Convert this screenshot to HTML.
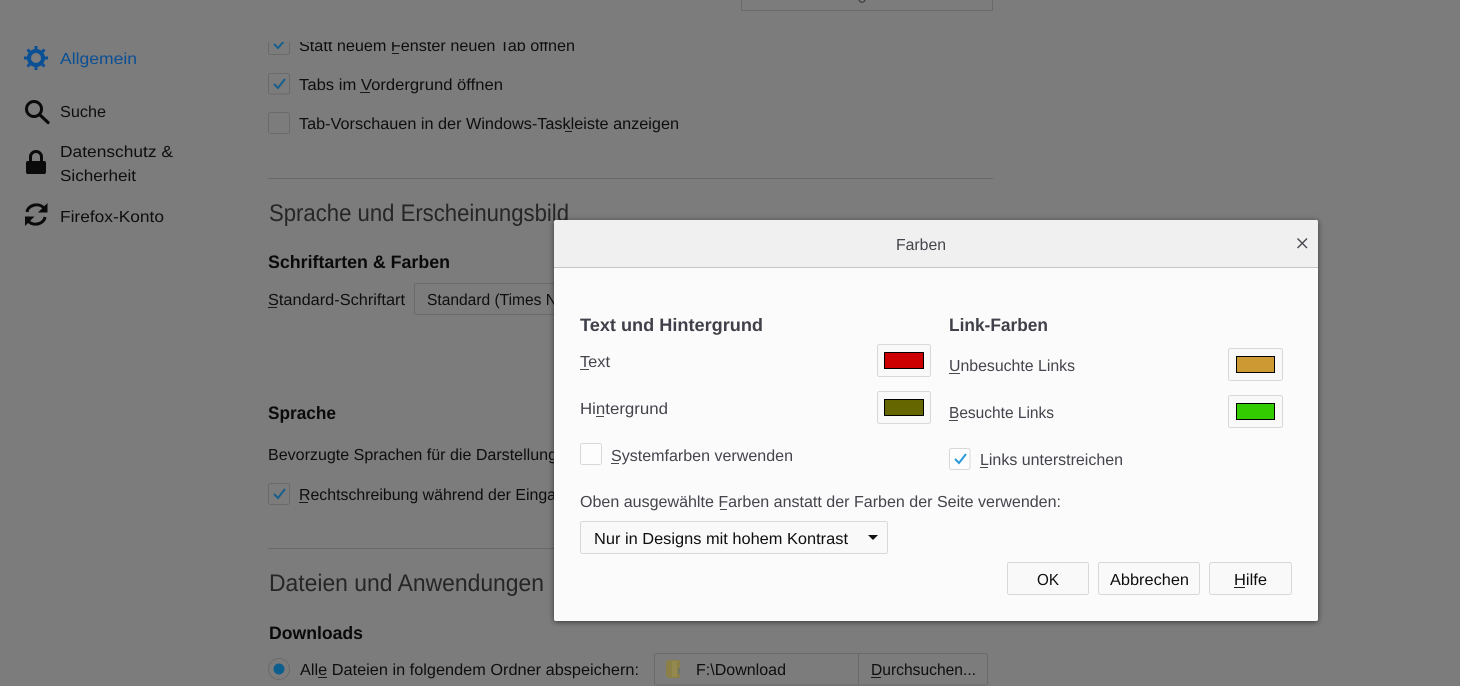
<!DOCTYPE html>
<html lang="de"><head><meta charset="utf-8"><title>Farben</title>
<style>
html,body{margin:0;padding:0;width:1460px;height:686px;overflow:hidden;background:#7c7c7c}
svg{display:block;position:absolute;left:0;top:0}
text{font-family:"Liberation Sans",sans-serif;font-size:16px;fill:#0e0e0e;text-rendering:geometricPrecision}
.h{font-size:24px;fill:#262626}
.b{font-weight:bold;font-size:18px;fill:#0a0a0a}
.d{fill:#44444c}
.db{font-weight:bold;font-size:18px;fill:#40404a}
.cb{fill:#7c7c7c;stroke:#6a6a6a;stroke-width:1}
.ck{fill:none;stroke:#175f8c;stroke-width:2}
.u{fill:#1a1a1a}
.ud{fill:#484850}
.btn{fill:#f9f9f9;stroke:#d8d8d8;stroke-width:1}
.sw{stroke:#000;stroke-width:1}
</style></head>
<body>
<svg width="1460" height="686" viewBox="0 0 1460 686" xmlns="http://www.w3.org/2000/svg">
<defs><clipPath id="c"><rect x="240" y="42" width="800" height="644"/></clipPath></defs>
<rect width="1460" height="686" fill="#7c7c7c"/>

<!-- top box -->
<rect x="741.500" y="-6" width="251" height="16.500" fill="none" stroke="#6a6a6a"/>
<path d="M859 0c1 3 5 3 6 0" fill="none" stroke="#333" stroke-width="1"/>

<!-- sidebar -->
<g fill="none" stroke="#0b4f94">
<circle cx="36" cy="58" r="7" stroke-width="4"/>
<path d="M36 46v24M24 58h24M27.500 49.500l17 17M44.500 49.500l-17 17" stroke-width="3"/>
</g>
<circle cx="36" cy="58" r="5" fill="#7c7c7c"/>
<text x="60" y="64" textLength="77" lengthAdjust="spacingAndGlyphs" style="fill:#0b4f94">Allgemein</text>

<circle cx="34" cy="109" r="7.500" fill="none" stroke="#0a0a0a" stroke-width="3"/>
<path d="M39.500 114.500L48 122.500" stroke="#0a0a0a" stroke-width="3.200" stroke-linecap="round"/>
<text x="60" y="117" textLength="46" lengthAdjust="spacingAndGlyphs">Suche</text>

<path d="M30.500 162v-5a5.500 5.500 0 0 1 11 0V162" fill="none" stroke="#0a0a0a" stroke-width="3"/>
<rect x="26" y="161" width="20" height="13" rx="2" fill="#0a0a0a"/>
<text x="60" y="157" textLength="113" lengthAdjust="spacingAndGlyphs">Datenschutz &amp;</text>
<text x="60" y="181" textLength="76" lengthAdjust="spacingAndGlyphs">Sicherheit</text>

<g fill="none" stroke="#0a0a0a" stroke-width="3">
<path d="M27 212a9.500 8 0 0 1 16.500-4.500"/>
<path d="M45 217a9.500 8 0 0 1-16.500 4.500"/>
</g>
<path d="M47.500 203v9.500h-9.500zM25 226v-9.500h9.500z" fill="#0a0a0a"/>
<text x="60" y="222" textLength="104" lengthAdjust="spacingAndGlyphs">Firefox-Konto</text>

<!-- main -->
<g clip-path="url(#c)">
<rect class="cb" x="268.500" y="33.500" width="21" height="21" rx="2"/>
<path class="ck" d="M274 44l4 4 7-8"/>
<text x="299" y="51" textLength="276" lengthAdjust="spacingAndGlyphs">Statt neuem Fenster neuen Tab öffnen</text>
<rect class="u" x="392" y="53" width="7" height="1"/>
</g>

<rect class="cb" x="268.500" y="73.500" width="21" height="20.500" rx="2"/>
<path class="ck" d="M274 84l4 4 7-9"/>
<text x="299" y="90" textLength="204" lengthAdjust="spacingAndGlyphs">Tabs im Vordergrund öffnen</text>
<rect class="u" x="360" y="92" width="10" height="1"/>

<rect class="cb" x="268.500" y="112.500" width="21" height="21" rx="2"/>
<text x="299" y="129" textLength="380" lengthAdjust="spacingAndGlyphs">Tab-Vorschauen in der Windows-Taskleiste anzeigen</text>
<rect class="u" x="565" y="131" width="7" height="1"/>

<rect x="268" y="178" width="725" height="1" fill="#686868"/>
<text class="h" x="269" y="221" textLength="300" lengthAdjust="spacingAndGlyphs">Sprache und Erscheinungsbild</text>

<text class="b" x="268" y="268" textLength="182" lengthAdjust="spacingAndGlyphs">Schriftarten &amp; Farben</text>
<text x="268" y="305" textLength="137" lengthAdjust="spacingAndGlyphs">Standard-Schriftart</text>
<rect class="u" x="268" y="307" width="9" height="1"/>
<rect class="cb" x="414.500" y="283.500" width="200" height="31" rx="2"/>
<text x="427" y="305" textLength="130" lengthAdjust="spacingAndGlyphs">Standard (Times N</text>

<text class="b" x="268" y="419" textLength="68" lengthAdjust="spacingAndGlyphs">Sprache</text>
<text x="268" y="460" textLength="289" lengthAdjust="spacingAndGlyphs">Bevorzugte Sprachen für die Darstellung</text>

<rect class="cb" x="268.500" y="483.500" width="21" height="21" rx="2"/>
<path class="ck" d="M274 494l4 4 7-9"/>
<text x="299" y="500" textLength="257" lengthAdjust="spacingAndGlyphs">Rechtschreibung während der Einga</text>
<rect class="u" x="299" y="502" width="9" height="1"/>

<rect x="268" y="548" width="725" height="1" fill="#686868"/>
<text class="h" x="269" y="591" textLength="275" lengthAdjust="spacingAndGlyphs">Dateien und Anwendungen</text>

<text class="b" x="269" y="639" textLength="94" lengthAdjust="spacingAndGlyphs">Downloads</text>

<circle cx="279" cy="669" r="10.500" fill="#7c7c7c" stroke="#6a6a6a"/>
<circle cx="279" cy="669" r="5.500" fill="#0e5f8e"/>
<text x="300" y="675" textLength="339" lengthAdjust="spacingAndGlyphs">Alle Dateien in folgendem Ordner abspeichern:</text>
<rect class="u" x="318" y="677" width="9" height="1"/>

<rect x="654.500" y="653.500" width="333" height="31.500" rx="2" fill="#7c7c7c" stroke="#6a6a6a"/>
<rect x="858" y="654" width="1" height="31" fill="#6a6a6a"/>
<path d="M666 661l5-1h8l1 2v15l-2 1h-10l-2-2z" fill="#8a8048"/>
<rect x="672" y="661" width="5" height="16" fill="#94894f"/>
<rect x="678" y="668" width="2" height="6" fill="#6e7468"/>
<text x="696" y="675" textLength="90" lengthAdjust="spacingAndGlyphs">F:\Download</text>
<text x="871" y="675" textLength="105" lengthAdjust="spacingAndGlyphs">Durchsuchen...</text>
<rect class="u" x="871" y="677" width="10" height="1"/>

<!-- dialog -->
<g style="filter:drop-shadow(0 1px 3px rgba(0,0,0,.55))">
<rect x="554" y="220" width="764" height="401" rx="2" fill="#fbfbfb"/>
</g>
<path d="M554 267v-45a2 2 0 0 1 2-2h760a2 2 0 0 1 2 2v45z" fill="#f0f0f0"/>
<rect x="554" y="267" width="764" height="1" fill="#c6c6c6"/>
<text class="d" x="896" y="250" textLength="50" lengthAdjust="spacingAndGlyphs">Farben</text>
<path d="M1297.500 238.500l9.500 9.500M1307 238.500l-9.500 9.500" stroke="#484850" stroke-width="1.400" fill="none"/>

<text class="db" x="580" y="331" textLength="183" lengthAdjust="spacingAndGlyphs">Text und Hintergrund</text>
<text class="db" x="949" y="331" textLength="99" lengthAdjust="spacingAndGlyphs">Link-Farben</text>

<text class="d" x="580" y="367" textLength="30" lengthAdjust="spacingAndGlyphs">Text</text>
<rect class="ud" x="580" y="369" width="9" height="1"/>
<rect class="btn" x="877.500" y="344.500" width="53" height="32" rx="2"/>
<rect class="sw" x="884.500" y="352.500" width="39" height="16" fill="#cc0000"/>

<text class="d" x="580" y="414" textLength="88" lengthAdjust="spacingAndGlyphs">Hintergrund</text>
<rect class="ud" x="596" y="416" width="8" height="1"/>
<rect class="btn" x="877.500" y="391.500" width="53" height="32" rx="2"/>
<rect class="sw" x="884.500" y="399.500" width="39" height="16" fill="#666600"/>

<rect x="580.500" y="443.500" width="21" height="21" rx="2" fill="#fdfdfd" stroke="#d8d8d8"/>
<text class="d" x="611" y="461" textLength="182" lengthAdjust="spacingAndGlyphs">Systemfarben verwenden</text>
<rect class="ud" x="611" y="463" width="8" height="1"/>

<text class="d" x="949" y="371" textLength="126" lengthAdjust="spacingAndGlyphs">Unbesuchte Links</text>
<rect class="ud" x="949" y="373" width="11" height="1"/>
<rect class="btn" x="1228.500" y="348.500" width="54" height="32" rx="2"/>
<rect class="sw" x="1236.500" y="356.500" width="38" height="16" fill="#cc9933"/>

<text class="d" x="949" y="418" textLength="105" lengthAdjust="spacingAndGlyphs">Besuchte Links</text>
<rect class="ud" x="949" y="420" width="9" height="1"/>
<rect class="btn" x="1228.500" y="395.500" width="54" height="32" rx="2"/>
<rect class="sw" x="1236.500" y="403.500" width="38" height="16" fill="#33cc00"/>

<rect x="949.500" y="448.500" width="20.500" height="21" rx="2" fill="#fdfdfd" stroke="#d8d8d8"/>
<path d="M955 459l4 4 7-9" fill="none" stroke="#2a9ad8" stroke-width="2"/>
<text class="d" x="980" y="465" textLength="143" lengthAdjust="spacingAndGlyphs">Links unterstreichen</text>
<rect class="ud" x="980" y="467" width="8" height="1"/>

<text class="d" x="580" y="507" textLength="481" lengthAdjust="spacingAndGlyphs">Oben ausgewählte Farben anstatt der Farben der Seite verwenden:</text>
<rect class="ud" x="720" y="509" width="7" height="1"/>

<rect class="btn" x="580.500" y="521.500" width="307" height="32" rx="2"/>
<text x="594" y="544" textLength="254" lengthAdjust="spacingAndGlyphs">Nur in Designs mit hohem Kontrast</text>
<path d="M868 535h10l-5 5z" fill="#111"/>

<rect class="btn" x="1007.500" y="562.500" width="81" height="32" rx="2"/>
<text x="1037" y="585" textLength="22" lengthAdjust="spacingAndGlyphs">OK</text>
<rect class="btn" x="1098.500" y="562.500" width="101" height="32" rx="2"/>
<text x="1110" y="585" textLength="79" lengthAdjust="spacingAndGlyphs">Abbrechen</text>
<rect class="btn" x="1209.500" y="562.500" width="82" height="32" rx="2"/>
<text x="1234" y="585" textLength="33" lengthAdjust="spacingAndGlyphs">Hilfe</text>
<rect class="u" x="1234" y="587" width="11" height="1"/>
</svg>
</body></html>
